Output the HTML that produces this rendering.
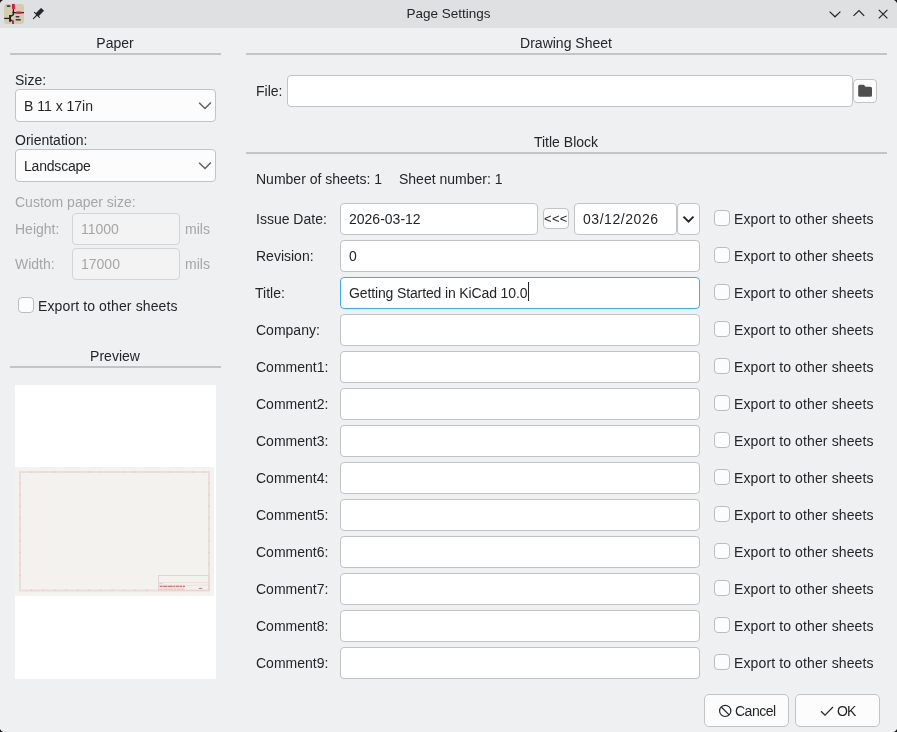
<!DOCTYPE html>
<html><head><meta charset="utf-8">
<style>
*{box-sizing:border-box}
html,body{margin:0;padding:0;width:897px;height:732px;overflow:hidden;background:#eff0f1}
#wrap{position:absolute;left:0;top:0;width:897px;height:732px;will-change:transform;background:#eff0f1}
body{font-family:"Liberation Sans",sans-serif;font-size:14px;color:#232629;position:relative}
.a{position:absolute;white-space:nowrap}
svg.a{overflow:visible}
.tb{position:absolute;left:0;top:0;width:897px;height:28px;background:#dee0e2}
.ttl{position:absolute;left:0;width:897px;top:6px;text-align:center;font-size:13.5px;line-height:16px}
.hdr{position:absolute;text-align:center;font-size:14px;line-height:16px}
.hl{position:absolute;height:2px;background:#c3c4c6}
.inp{position:absolute;background:#fff;border:1px solid #c2c3c5;border-radius:4px}
.dis{background:#f3f3f3;border-color:#d3d4d5}
.lbl{position:absolute;white-space:nowrap;line-height:16px}
.cb{position:absolute;width:16px;height:16px;border:1px solid #bbbcbe;border-radius:4px;background:#fcfcfc}
.btn{position:absolute;background:#fcfcfc;border:1px solid #c2c3c5;border-radius:4px}
.gray{color:#a4a6a8}
</style></head><body><div id="wrap">
<div class="tb"></div>
<div class="ttl">Page Settings</div>
<svg class="a" style="left:0;top:0" width="50" height="28" viewBox="0 0 50 28">
<rect x="4" y="4" width="20" height="20" rx="3" fill="#d5cbad"/>
<rect x="6.6" y="5.2" width="4" height="1.7" rx="0.8" fill="#3a3a3a"/>
<rect x="12" y="3.9" width="2.8" height="5" fill="#e3134f"/>
<path d="M13.4 8.9 V12.6 H24 M13.4 12.6 V14.6 L10.4 16.6 M10.4 19.6 L13 21.5 V24" fill="none" stroke="#232629" stroke-width="1.3"/><circle cx="13.4" cy="12.6" r="1.1" fill="#232629"/>
<rect x="16" y="11.4" width="5.8" height="2.3" rx="1" fill="#e3134f"/>
<path d="M4.2 18.4 H9.8" stroke="#232629" stroke-width="1.3"/>
<rect x="9.1" y="15" width="1.9" height="6.8" fill="#232629"/>
<circle cx="13" cy="21.3" r="1" fill="#e3134f"/>
<rect x="15.6" y="15.9" width="3.9" height="1.6" rx="0.7" fill="#3a3a3a"/>
<rect x="15.6" y="19" width="5.3" height="1.6" rx="0.7" fill="#3a3a3a"/>
<path d="M33.4 18.6 L37 15" stroke="#232629" stroke-width="1.1" stroke-linecap="round"/>
<path d="M34.5 12.4 L39.4 17.3" stroke="#232629" stroke-width="1.1" stroke-linecap="round"/>
<path d="M41.1 8.2 L43.7 10.8 L38.5 16 L35.9 13.4 Z" fill="#232629" stroke="#232629" stroke-width="0.6" stroke-linejoin="round"/>
<path d="M0 0 H3 Q1 1 0 3 Z" fill="#1b1b1b"/>
</svg>
<svg class="a" style="left:820px;top:0" width="77" height="28" viewBox="820 0 77 28">
<path d="M829.6 11.6 L835 16.8 L840.4 11.6" fill="none" stroke="#232629" stroke-width="1.2"/>
<path d="M853.5 15.9 L859 10.5 L864.2 15.9" fill="none" stroke="#232629" stroke-width="1.2"/>
<path d="M878.8 9.9 L887.4 18.4 M887.4 9.9 L878.8 18.4" fill="none" stroke="#232629" stroke-width="1.2"/>
<path d="M897 0 V3 Q896 1 894 0 Z" fill="#1b1b1b"/>
</svg>

<div class="hdr" style="left:10px;width:210px;top:35px">Paper</div>
<div class="hl" style="left:10px;width:211px;top:53px"></div>
<div class="lbl" style="left:15px;top:72px">Size:</div>
<div class="inp" style="left:15px;top:89px;width:201px;height:33px;background:#fcfcfc"></div>
<div class="lbl" style="left:24px;top:98px">B 11 x 17in</div>
<svg class="a" style="left:180px;top:89px" width="40" height="40" viewBox="180 89 40 40"><path d="M199.1 102.8 L205 108.5 L210.9 102.5" fill="none" stroke="#5d5f61" stroke-width="1.5"/></svg>
<div class="lbl" style="left:15px;top:132px">Orientation:</div>
<div class="inp" style="left:15px;top:149px;width:201px;height:33px;background:#fcfcfc"></div>
<div class="lbl" style="left:24px;top:158px;letter-spacing:-0.2px">Landscape</div>
<svg class="a" style="left:180px;top:149px" width="40" height="40" viewBox="180 149 40 40"><path d="M199.1 162.8 L205 168.5 L210.9 162.5" fill="none" stroke="#5d5f61" stroke-width="1.5"/></svg>
<div class="lbl gray" style="left:15px;top:194px">Custom paper size:</div>
<div class="lbl gray" style="left:15px;top:221px">Height:</div>
<div class="inp dis" style="left:72px;top:213px;width:108px;height:32px"></div>
<div class="lbl gray" style="left:81px;top:221px">11000</div>
<div class="lbl gray" style="left:185px;top:221px">mils</div>
<div class="lbl gray" style="left:15px;top:256px">Width:</div>
<div class="inp dis" style="left:72px;top:248px;width:108px;height:32px"></div>
<div class="lbl gray" style="left:81px;top:256px">17000</div>
<div class="lbl gray" style="left:185px;top:256px">mils</div>
<div class="cb" style="left:18px;top:297px"></div>
<div class="lbl" style="left:38px;top:298px;letter-spacing:0.12px">Export to other sheets</div>

<div class="hdr" style="left:10px;width:210px;top:348px">Preview</div>
<div class="hl" style="left:10px;width:211px;top:366px"></div>
<svg class="a" style="left:15px;top:385px" width="201" height="294" viewBox="15 385 201 294">
<rect x="15" y="385" width="201" height="294" fill="#ffffff"/>
<rect x="15" y="467" width="199" height="129" fill="#f4f2ee"/>
<rect x="20" y="472" width="189" height="118.5" fill="none" stroke="#ecdcda" stroke-width="2"/>
<rect x="31.1" y="471" width="1" height="2" fill="#e6cfcd"/><rect x="42.6" y="471" width="1" height="2" fill="#e6cfcd"/><rect x="54.1" y="471" width="1" height="2" fill="#e6cfcd"/><rect x="65.6" y="471" width="1" height="2" fill="#e6cfcd"/><rect x="77.1" y="471" width="1" height="2" fill="#e6cfcd"/><rect x="88.6" y="471" width="1" height="2" fill="#e6cfcd"/><rect x="100.1" y="471" width="1" height="2" fill="#e6cfcd"/><rect x="111.6" y="471" width="1" height="2" fill="#e6cfcd"/><rect x="123.1" y="471" width="1" height="2" fill="#e6cfcd"/><rect x="134.6" y="471" width="1" height="2" fill="#e6cfcd"/><rect x="146.1" y="471" width="1" height="2" fill="#e6cfcd"/><rect x="157.6" y="471" width="1" height="2" fill="#e6cfcd"/><rect x="169.1" y="471" width="1" height="2" fill="#e6cfcd"/><rect x="180.6" y="471" width="1" height="2" fill="#e6cfcd"/><rect x="192.1" y="471" width="1" height="2" fill="#e6cfcd"/><rect x="203.6" y="471" width="1" height="2" fill="#e6cfcd"/><rect x="31.1" y="589" width="1" height="2" fill="#e6cfcd"/><rect x="42.6" y="589" width="1" height="2" fill="#e6cfcd"/><rect x="54.1" y="589" width="1" height="2" fill="#e6cfcd"/><rect x="65.6" y="589" width="1" height="2" fill="#e6cfcd"/><rect x="77.1" y="589" width="1" height="2" fill="#e6cfcd"/><rect x="88.6" y="589" width="1" height="2" fill="#e6cfcd"/><rect x="100.1" y="589" width="1" height="2" fill="#e6cfcd"/><rect x="111.6" y="589" width="1" height="2" fill="#e6cfcd"/><rect x="123.1" y="589" width="1" height="2" fill="#e6cfcd"/><rect x="134.6" y="589" width="1" height="2" fill="#e6cfcd"/><rect x="146.1" y="589" width="1" height="2" fill="#e6cfcd"/><rect x="19" y="482.9" width="2" height="1" fill="#e6cfcd"/><rect x="19" y="494.4" width="2" height="1" fill="#e6cfcd"/><rect x="19" y="505.9" width="2" height="1" fill="#e6cfcd"/><rect x="19" y="517.4" width="2" height="1" fill="#e6cfcd"/><rect x="19" y="528.9" width="2" height="1" fill="#e6cfcd"/><rect x="19" y="540.4" width="2" height="1" fill="#e6cfcd"/><rect x="19" y="551.9" width="2" height="1" fill="#e6cfcd"/><rect x="19" y="563.4" width="2" height="1" fill="#e6cfcd"/><rect x="19" y="574.9" width="2" height="1" fill="#e6cfcd"/><rect x="208" y="482.9" width="2" height="1" fill="#e6cfcd"/><rect x="208" y="494.4" width="2" height="1" fill="#e6cfcd"/><rect x="208" y="505.9" width="2" height="1" fill="#e6cfcd"/><rect x="208" y="517.4" width="2" height="1" fill="#e6cfcd"/><rect x="208" y="528.9" width="2" height="1" fill="#e6cfcd"/><rect x="208" y="540.4" width="2" height="1" fill="#e6cfcd"/><rect x="208" y="551.9" width="2" height="1" fill="#e6cfcd"/><rect x="208" y="563.4" width="2" height="1" fill="#e6cfcd"/>
<rect x="158.5" y="575.5" width="50.5" height="15" fill="none" stroke="#e8d2d0" stroke-width="1"/>
<path d="M158.5 582.5 H209 M158.5 585.2 H209" stroke="#ead6d4" stroke-width="0.7"/>
<path d="M159.6 586.3 H185" stroke="#b8575a" stroke-width="1" stroke-dasharray="3 0.6 4 0.5 5 0.6 2 0.6 3 0.5"/>
<path d="M159.3 589 H185" stroke="#d9aeae" stroke-width="0.8" stroke-dasharray="4 0.6 3 0.5 6 0.6 2 0.6 3 0.5"/>
<path d="M159.3 583.6 H163" stroke="#dbb3b3" stroke-width="0.6"/>
<path d="M198.8 588.4 H202.3" stroke="#ba6a6c" stroke-width="0.9"/>
</svg>

<div class="hdr" style="left:246px;width:640px;top:35px">Drawing Sheet</div>
<div class="hl" style="left:246px;width:641px;top:53px"></div>
<div class="lbl" style="left:256px;top:83px">File:</div>
<div class="inp" style="left:287px;top:75px;width:566px;height:32px"></div>
<div class="btn" style="left:853px;top:79px;width:24px;height:24px"></div>
<svg class="a" style="left:853px;top:79px" width="25" height="25" viewBox="853 79 25 25">
<path d="M858.2 86.3 Q858.2 84.8 859.7 84.8 H863.3 Q864 84.8 864.5 85.4 L865.5 86.7 H870.5 Q872 86.7 872 88.2 V95.2 Q872 96.7 870.5 96.7 H859.7 Q858.2 96.7 858.2 95.2 Z" fill="#4f4f4f"/>
</svg>

<div class="hdr" style="left:246px;width:640px;top:134px">Title Block</div>
<div class="hl" style="left:246px;width:641px;top:152px"></div>
<div class="lbl" style="left:256px;top:171px">Number of sheets: 1</div>
<div class="lbl" style="left:399px;top:171px">Sheet number: 1</div>

<div class="lbl" style="left:256px;top:211px">Issue Date:</div>
<div class="inp" style="left:340px;top:203px;width:198px;height:32px"></div>
<div class="lbl" style="left:349px;top:211px">2026-03-12</div>
<div class="btn" style="left:543px;top:208px;width:26px;height:21px"></div>
<div class="lbl" style="left:544px;top:211px;font-size:13px;letter-spacing:0.3px">&lt;&lt;&lt;</div>
<div class="inp" style="left:574px;top:203px;width:103px;height:32px"></div>
<div class="lbl" style="left:583px;top:211px;letter-spacing:0.55px">03/12/2026</div>
<div class="btn" style="left:677px;top:203px;width:23px;height:32px"></div>
<svg class="a" style="left:677px;top:203px" width="23" height="32"><path d="M6.5 13.6 L11.5 18.6 L16.5 13.6" fill="none" stroke="#232629" stroke-width="2.0"/></svg>
<div class="cb" style="left:714px;top:210px"></div>
<div class="lbl" style="left:734px;top:211px;letter-spacing:0.12px">Export to other sheets</div>
<div class="lbl" style="left:256px;top:248px">Revision:</div>
<div class="inp" style="left:340px;top:240px;width:360px;height:32px;"></div>
<div class="lbl" style="left:349px;top:248px">0</div>
<div class="cb" style="left:714px;top:247px"></div>
<div class="lbl" style="left:734px;top:248px;letter-spacing:0.12px">Export to other sheets</div>
<div class="lbl" style="left:255px;top:285px">Title:</div>
<div class="inp" style="left:340px;top:277px;width:360px;height:32px;border-color:#3daee9;"></div>
<div class="lbl" style="left:349px;top:285px;letter-spacing:-0.13px">Getting Started in KiCad 10.0<span style="display:inline-block;width:1px;height:19px;background:#232629;vertical-align:top;margin-top:-3px;margin-left:1px"></span></div>
<div class="cb" style="left:714px;top:284px"></div>
<div class="lbl" style="left:734px;top:285px;letter-spacing:0.12px">Export to other sheets</div>
<div class="lbl" style="left:256px;top:322px">Company:</div>
<div class="inp" style="left:340px;top:314px;width:360px;height:32px;"></div>
<div class="cb" style="left:714px;top:321px"></div>
<div class="lbl" style="left:734px;top:322px;letter-spacing:0.12px">Export to other sheets</div>
<div class="lbl" style="left:256px;top:359px">Comment1:</div>
<div class="inp" style="left:340px;top:351px;width:360px;height:32px;"></div>
<div class="cb" style="left:714px;top:358px"></div>
<div class="lbl" style="left:734px;top:359px;letter-spacing:0.12px">Export to other sheets</div>
<div class="lbl" style="left:256px;top:396px">Comment2:</div>
<div class="inp" style="left:340px;top:388px;width:360px;height:32px;"></div>
<div class="cb" style="left:714px;top:395px"></div>
<div class="lbl" style="left:734px;top:396px;letter-spacing:0.12px">Export to other sheets</div>
<div class="lbl" style="left:256px;top:433px">Comment3:</div>
<div class="inp" style="left:340px;top:425px;width:360px;height:32px;"></div>
<div class="cb" style="left:714px;top:432px"></div>
<div class="lbl" style="left:734px;top:433px;letter-spacing:0.12px">Export to other sheets</div>
<div class="lbl" style="left:256px;top:470px">Comment4:</div>
<div class="inp" style="left:340px;top:462px;width:360px;height:32px;"></div>
<div class="cb" style="left:714px;top:469px"></div>
<div class="lbl" style="left:734px;top:470px;letter-spacing:0.12px">Export to other sheets</div>
<div class="lbl" style="left:256px;top:507px">Comment5:</div>
<div class="inp" style="left:340px;top:499px;width:360px;height:32px;"></div>
<div class="cb" style="left:714px;top:506px"></div>
<div class="lbl" style="left:734px;top:507px;letter-spacing:0.12px">Export to other sheets</div>
<div class="lbl" style="left:256px;top:544px">Comment6:</div>
<div class="inp" style="left:340px;top:536px;width:360px;height:32px;"></div>
<div class="cb" style="left:714px;top:543px"></div>
<div class="lbl" style="left:734px;top:544px;letter-spacing:0.12px">Export to other sheets</div>
<div class="lbl" style="left:256px;top:581px">Comment7:</div>
<div class="inp" style="left:340px;top:573px;width:360px;height:32px;"></div>
<div class="cb" style="left:714px;top:580px"></div>
<div class="lbl" style="left:734px;top:581px;letter-spacing:0.12px">Export to other sheets</div>
<div class="lbl" style="left:256px;top:618px">Comment8:</div>
<div class="inp" style="left:340px;top:610px;width:360px;height:32px;"></div>
<div class="cb" style="left:714px;top:617px"></div>
<div class="lbl" style="left:734px;top:618px;letter-spacing:0.12px">Export to other sheets</div>
<div class="lbl" style="left:256px;top:655px">Comment9:</div>
<div class="inp" style="left:340px;top:647px;width:360px;height:32px;"></div>
<div class="cb" style="left:714px;top:654px"></div>
<div class="lbl" style="left:734px;top:655px;letter-spacing:0.12px">Export to other sheets</div>

<div class="btn" style="left:704px;top:694px;width:85px;height:33px;border-radius:5px"></div>
<svg class="a" style="left:715px;top:701px" width="20" height="20" viewBox="715 701 20 20">
<circle cx="725.2" cy="710.9" r="5.6" fill="none" stroke="#232629" stroke-width="1.2"/>
<path d="M721.3 707 L729.1 714.8" stroke="#232629" stroke-width="1.2"/>
</svg>
<div class="lbl" style="left:735px;top:703px;letter-spacing:-0.5px">Cancel</div>
<div class="btn" style="left:795px;top:694px;width:85px;height:33px;border-radius:5px"></div>
<svg class="a" style="left:815px;top:701px" width="20" height="20" viewBox="815 701 20 20">
<path d="M821 711.3 L825 715.2 L833 707" fill="none" stroke="#232629" stroke-width="1.2"/>
</svg>
<div class="lbl" style="left:837px;top:703px;letter-spacing:-0.8px">OK</div>
<svg class="a" style="left:0;top:0" width="897" height="732"><path d="M0 732 V729 Q1 731 3 732 Z M897 732 V729 Q896 731 894 732 Z" fill="#1b1b1b"/></svg>
</div></body></html>
